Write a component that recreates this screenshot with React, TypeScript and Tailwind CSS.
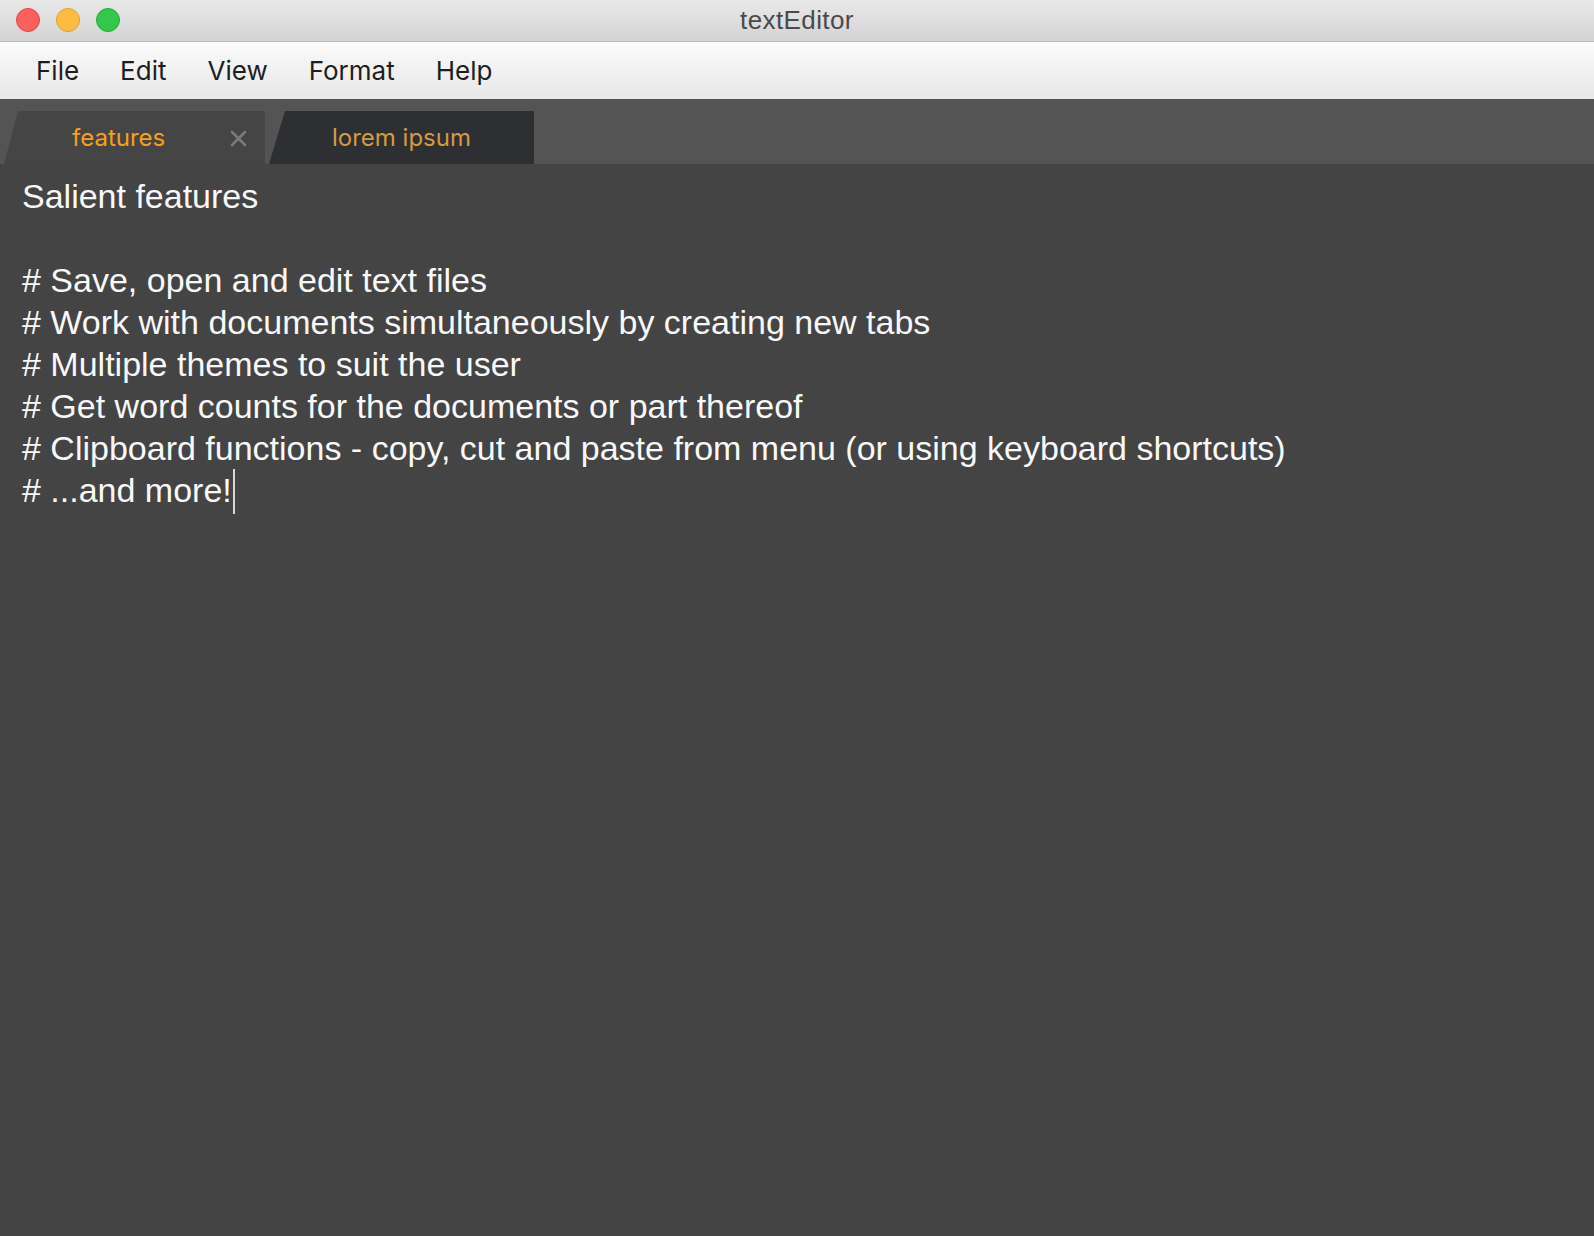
import type React from "react"

const menus = ["File", "Edit", "View", "Format", "Help"]

const lines = [
  "Salient features",
  "",
  "# Save, open and edit text files",
  "# Work with documents simultaneously by creating new tabs",
  "# Multiple themes to suit the user",
  "# Get word counts for the documents or part thereof",
  "# Clipboard functions - copy, cut and paste from menu (or using keyboard shortcuts)",
  "# ...and more!",
]

const App: React.FC = () => {
  return (
    <div className="w-[1594px] h-[1236px] flex flex-col overflow-hidden bg-[#444444]">
      {/* title bar */}
      <div className="relative h-[42px] shrink-0 bg-gradient-to-b from-[#e9e9e9] to-[#d3d3d3] border-b border-[#b8b8b8] flex items-center justify-center">
        <div className="absolute left-[16px] top-[8px] flex gap-[16px]">
          <span className="w-[24px] h-[24px] rounded-full bg-[#fc605c] border border-[#df4744]" />
          <span className="w-[24px] h-[24px] rounded-full bg-[#fdbc40] border border-[#de9f34]" />
          <span className="w-[24px] h-[24px] rounded-full bg-[#34c84a] border border-[#27aa35]" />
        </div>
        <span className="text-[26px] tracking-[0.4px] text-[#4a4a4a] font-['Liberation_Sans',sans-serif]">textEditor</span>
      </div>

      {/* menu bar */}
      <div className="h-[57px] shrink-0 bg-gradient-to-b from-[#fbfbfb] to-[#e7e7e7] flex items-center pl-[36px] gap-[41px] font-['Inter',sans-serif] text-[26px] text-[#1e1e1e]">
        {menus.map((m) => (
          <span key={m}>{m}</span>
        ))}
      </div>

      {/* tab strip */}
      <div className="h-[65px] shrink-0 bg-[#545454] flex items-end font-['Inter',sans-serif] text-[24px]">
        <div
          className="relative ml-[4px] w-[261px] h-[53px] bg-[#454545] flex items-center"
          style={{ clipPath: "polygon(14px 0, 100% 0, 100% 100%, 0 100%)" }}
        >
          <span className="ml-[68px] text-[#f6a117]">features</span>
          <svg className="absolute left-[226px] top-[19px]" width="17" height="17" viewBox="0 0 17 17">
            <path d="M2 2 L15 15 M15 2 L2 15" stroke="#7a7a7a" strokeWidth="2.6" strokeLinecap="round" />
          </svg>
        </div>
        <div
          className="ml-[4px] w-[265px] h-[53px] bg-[#2e2f33] flex items-center"
          style={{ clipPath: "polygon(16px 0, 100% 0, 100% 100%, 0 100%)" }}
        >
          <span className="ml-[63px] text-[#d49a43]">lorem ipsum</span>
        </div>
      </div>

      {/* editor */}
      <div className="flex-1 bg-[#444444] pl-[22px] pt-[11px] font-['Liberation_Sans',Arial,sans-serif] text-[34px] leading-[42px] text-[#f8f8f8]">
        {lines.map((l, i) => (
          <div key={i} className="h-[42px] whitespace-pre">
            {l}
            {i === lines.length - 1 && (
              <span className="inline-block w-[2px] h-[45px] bg-[#d8d8d8] align-[-12px] ml-[1px]" />
            )}
          </div>
        ))}
      </div>
    </div>
  )
}

export default App
